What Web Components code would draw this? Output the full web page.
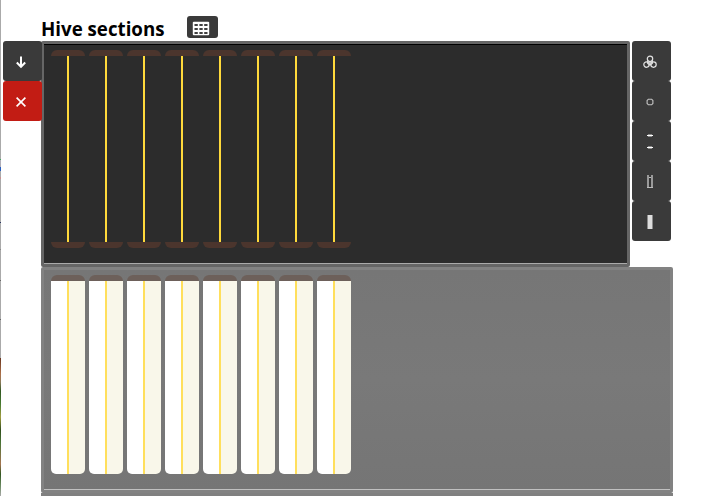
<!DOCTYPE html>
<html lang="en">
<head>
<meta charset="utf-8">
<title>Hive sections</title>
<style>
html, body { margin: 0; height: 100%; overflow: hidden; background: #fff; font-family: "Open Sans", "Noto Sans", sans-serif; }
</style>
</head>
<body>
<hive-page></hive-page>
<script>
const attach = (el, html) => {
  const t = document.createElement('template');
  t.innerHTML = html;
  el.attachShadow({ mode: 'open' }).append(t.content.cloneNode(true));
};

customElements.define('hive-button', class extends HTMLElement {
  constructor() {
    super();
    attach(this, `<style>
      :host { display: block; width: 39px; height: 40px; }
      button { display: flex; align-items: center; justify-content: center; width: 100%; height: 100%; margin: 0; padding: 0; border: 0; border-radius: 3px; background: #3a3a3a; color: #fff; }
      :host([kind="danger"]) button { background: #c21c14; }
      :host([kind="small"]) { width: 31px; height: 22px; }
      :host([kind="small"]) button { padding: 2px 3px 0 0; box-sizing: border-box; }
      ::slotted(svg) { display: block; }
    </style><button><slot></slot></button>`);
  }
});

customElements.define('hive-frame', class extends HTMLElement {
  constructor() {
    super();
    attach(this, `<style>
      :host { display: flex; flex-direction: column; align-items: center; width: 34px; height: 198px; }
      .bar { width: 34px; height: 6px; flex: none; background: #4b352d; }
      .top { border-radius: 6px 6px 0 0; }
      .bottom { border-radius: 0 0 6px 6px; }
      .comb { display: flex; justify-content: center; flex: 1; width: 34px; overflow: hidden; }
      .wax { width: 2px; background: #ffd93b; }
      .side { flex: 1; }
      :host([kind="deep"]) { height: 199px; }
      :host([kind="deep"]) .bar { background: #6d605a; }
      :host([kind="deep"]) .bottom { display: none; }
      :host([kind="deep"]) .comb { border-radius: 0 0 5px 5px; }
      :host([kind="deep"]) .wax { background: #ffdf5c; }
      :host([kind="deep"]) .left { background: #fff; }
      :host([kind="deep"]) .right { background: #f9f7ea; }
    </style><div class="bar top"></div><div class="comb"><div class="side left"></div><div class="wax"></div><div class="side right"></div></div><div class="bar bottom"></div>`);
  }
});

customElements.define('hive-box', class extends HTMLElement {
  constructor() {
    super();
    const kind = this.getAttribute('kind') || '';
    attach(this, `<style>
      :host { display: block; box-sizing: border-box; width: 589px; height: 226px; border: 3px solid #666; border-radius: 2px; background: #666; }
      .inner { display: flex; gap: 4px; box-sizing: border-box; height: 220px; padding: 5px 7px 0; border-top: 1px solid #000; border-bottom: 1px solid #aaa; background: #2c2c2c; }
      :host([kind="deep"]) { width: 632px; border-color: #828282; }
      :host([kind="deep"]) .inner { border-top: 0; border-bottom-color: #c0c0c0; background: linear-gradient(#767676, #797979 50%, #757575); }
    </style><div class="inner">${`<hive-frame kind="${kind}"></hive-frame>`.repeat(Number(this.getAttribute('frames')))}</div>`);
  }
});

customElements.define('hive-page', class extends HTMLElement {
  constructor() {
    super();
    attach(this, `<style>
      :host { display: flex; width: 702px; height: 496px; overflow: hidden; }
      .edge { width: 1px; flex: none; background: linear-gradient(#aaa 0 159px, #45a565 159px 160px, #b0aeb8 160px 167px, #285fc0 167px 171px, #aaa 171px 177px, #c98f91 177px 179px, #aaa 179px 222px, #27345f 222px 223px, #aaa 223px 249px, #888 249px 250px, #aaa 250px 280px, #666 280px 281px, #aaa 281px 319px, #666 319px 320px, #aaa 320px 358px, #68351e 358px, #ad7049 374px, #8c7b5c 382px, #315721 391px, #477b32 404px, #a19c40 417px, #304e1c 430px, #4b7537 443px, #a57450 464px, #315721 474px, #6c8b62 486px, #aaa); }
      main { flex: none; margin-left: 2px; width: 670px; }
      header { display: flex; height: 41px; box-sizing: border-box; padding: 16px 0 0 38px; }
      h3 { margin: 0; width: 146px; font-size: 18.72px; line-height: 26px; font-weight: 700; color: #000; }
      .super { display: grid; grid-template-columns: 38px 591px 39px; height: 226px; }
      .tools { position: relative; z-index: 1; }
      .left { width: 39px; }
      .left hive-button svg { margin: 2px 3px 0 0; }
      .right svg { margin: 2px 3px 0 0; }
      .deep, .next { margin-left: 38px; }
      .next { width: 632px; height: 3px; background: #808080; }
    </style>
    <div class="edge"></div>
    <main>
      <header><h3>Hive sections</h3>
        <hive-button kind="small"><svg width="18" height="15" viewBox="0 0 18 15"><rect x=".8" y=".8" width="16.4" height="13.4" rx="1" fill="#fff"/><path d="M2.5 3h3.3v2H2.5zM7.4 3h3.3v2H7.4zM12.2 3h3.3v2h-3.3zM2.5 7h3.3v2H2.5zM7.4 7h3.3v2H7.4zM12.2 7h3.3v2h-3.3zM2.5 11h3.3v2H2.5zM7.4 11h3.3v2H7.4zM12.2 11h3.3v2h-3.3z" fill="#414141"/></svg></hive-button>
      </header>
      <div class="super">
        <div class="tools left">
          <hive-button><svg width="12" height="14" viewBox="0 0 12 14" fill="none" stroke="#fff" stroke-width="2"><path d="M6 1.5v10M1.8 7.5 6 11.8l4.2-4.3"/></svg></hive-button>
          <hive-button kind="danger"><svg width="12" height="12" viewBox="0 0 12 12" stroke="#fff" stroke-width="1.6"><path d="M1.6 1.6l8.8 8.8M10.4 1.6l-8.8 8.8"/></svg></hive-button>
        </div>
        <hive-box frames="8"></hive-box>
        <div class="tools right">
          <hive-button><svg width="16" height="16" viewBox="0 0 16 16" fill="none" stroke="#e2e2e2" stroke-width="1.2"><circle cx="8" cy="4.8" r="2.7"/><circle cx="4.5" cy="10.6" r="2.7"/><circle cx="11.5" cy="10.6" r="2.7"/><path d="M5.7 6.3v3.2L8 11l2.3-1.5V6.3M6.5 7.8h3M8 7.5v3"/></svg></hive-button>
          <hive-button><svg width="8" height="8" viewBox="0 0 8 8" fill="none" stroke="#c4c4c4" stroke-width="1.1"><path d="M2.4 1.2h3.2l1.3 1.3v3L5.6 6.8H2.4L1.1 5.5v-3z"/></svg></hive-button>
          <hive-button><svg width="8" height="16" viewBox="0 0 8 16"><path d="M1 1h6v1H1zM1 13h6v1H1z" fill="#fff"/><path d="M2 0h4v1H2zM2 2h4v1H2zM2 12h4v1H2zM2 14h4v1H2z" fill="#8c8c8c"/></svg></hive-button>
          <hive-button><svg width="8" height="16" viewBox="0 0 8 16"><path d="M1 1h2v13H1zM5 1h2v13H5z" fill="#999"/><path d="M3 4h2v9H3z" fill="#333"/><path d="M3 3h2v1H3zM1 13h6v1H1z" fill="#bbb"/></svg></hive-button>
          <hive-button><svg width="6" height="14" viewBox="0 0 6 14"><path d="M.5 0h5v14h-5z" fill="#ddd"/></svg></hive-button>
        </div>
      </div>
      <hive-box class="deep" kind="deep" frames="8"></hive-box>
      <div class="next"></div>
    </main>`);
  }
});
</script>
</body>
</html>
